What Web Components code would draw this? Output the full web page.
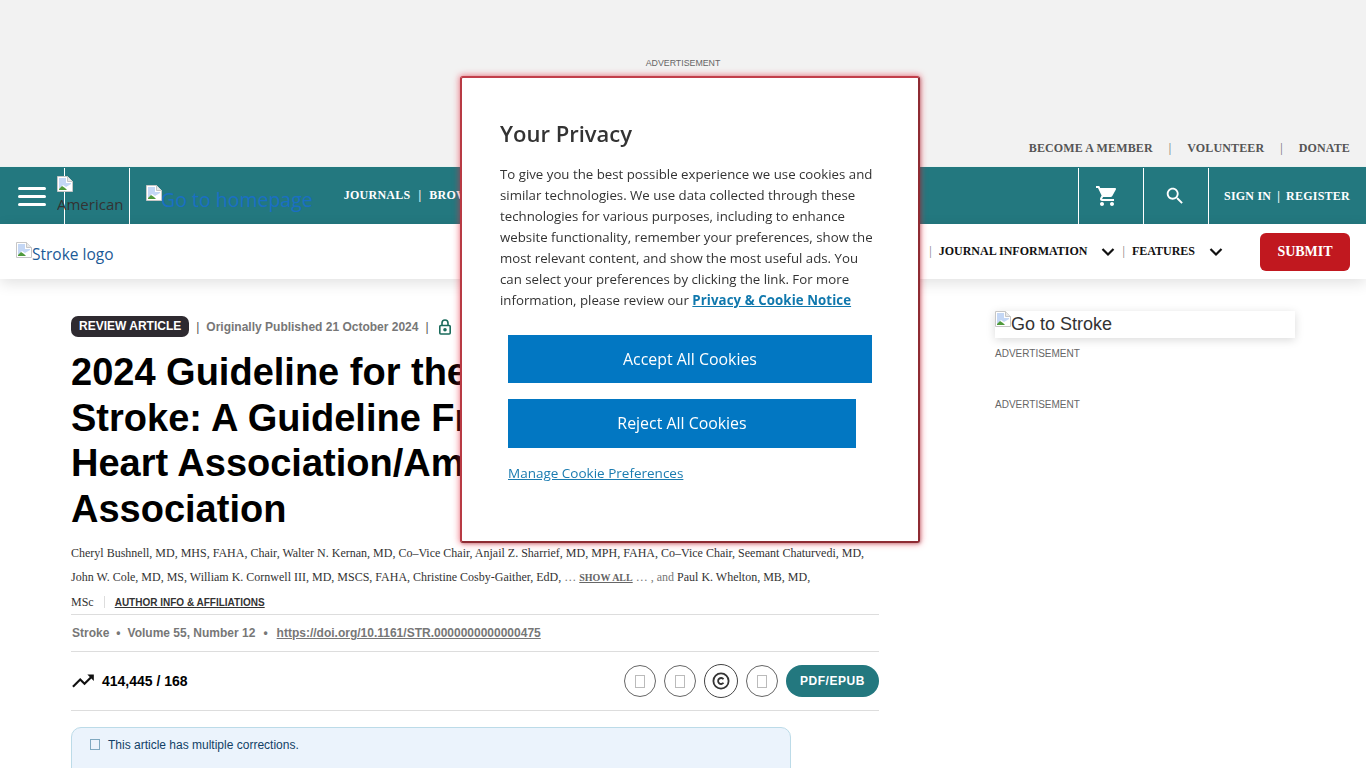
<!DOCTYPE html>
<html lang="en">
<head>
<meta charset="utf-8">
<title>Stroke</title>
<style>
  html, body { margin: 0; padding: 0; height: 768px; overflow: hidden; background: #fff; }
  body { font-family: "Liberation Sans", Arial, sans-serif; }
</style>
</head>
<body>
<top-band></top-band>
<main-bar></main-bar>
<sub-nav></sub-nav>
<page-body>
  <article-head></article-head>
  <side-rail slot="side"></side-rail>
</page-body>
<consent-box></consent-box>

<script>
// shared broken image glyph, the site's pictures did not load
const brokenIcon = `<svg width="16" height="16" viewBox="0 0 16 16" style="flex:none;display:block">
  <path d="M.5.5h10l5 5v10H.5z" fill="#fff" stroke="#c6c6c6"/>
  <path d="M10.500.5v5h5" fill="#e9e9e9" stroke="#c6c6c6"/>
  <path d="M2 2h7v5H14v1L9 11 6 9 2 13z" fill="#c4d7f5"/>
  <path d="M2 14v-1l3-3 3 2 2 2z" fill="#4f9a3c"/>
</svg>`;

class TopBand extends HTMLElement {
  connectedCallback() {
    this.attachShadow({ mode: 'open' });
    this.shadowRoot.innerHTML = `
      <style>
        :host { display: block; height: 167px; background: #f2f2f2; box-sizing: border-box; border-bottom: 1px solid #eaf2f0; position: relative; }
        .ad { padding-top: 57px; text-align: center; font: 8.800px/12px "Liberation Sans", sans-serif; color: #666; }
        .links {
          display: flex; justify-content: flex-end; align-items: center;
          margin-top: 71px; padding-right: 16px;
          font: bold 12px/16px "Liberation Serif", serif; color: #555; letter-spacing: .130px;
        }
        .sep { margin: 0 16px; font-weight: normal; color: #666; }
      </style>
      <div class="ad">ADVERTISEMENT</div>
      <div class="links">
        <span>BECOME A MEMBER</span><span class="sep">|</span>
        <span>VOLUNTEER</span><span class="sep">|</span>
        <span>DONATE</span>
      </div>
    `;
  }
}

class MainBar extends HTMLElement {
  connectedCallback() {
    this.attachShadow({ mode: 'open' });
    this.shadowRoot.innerHTML = `
      <style>
        :host { display: flex; height: 57px; background: #23787f; color: #fff; box-sizing: border-box; }
        .cell { display: flex; align-items: center; justify-content: center; border-right: 1px solid #fff; margin-top: 1px; box-sizing: border-box; }
        .burger { width: 65px; flex-direction: column; gap: 5px; }
        .burger i { display: block; width: 28px; height: 3px; background: #fff; border-radius: 2px; }
        .alt { width: 65px; position: relative; }
        .alt div {
          position: absolute; left: -8px; top: 8px; width: 72px;
          font: 15px/22px "Open Sans", sans-serif; color: #333; overflow: hidden; white-space: nowrap;
        }
        .alt span { display: block; margin-top: 1px; }
        .home {
          display: flex; align-items: flex-start; margin-left: 16px; padding-top: 18px;
          font: 19.500px/24px "Open Sans", sans-serif; color: #1a6fc4; white-space: nowrap;
        }
        .home span { margin-top: 3px; margin-left: -1px; }
        nav {
          flex: 1; display: flex; align-items: center; gap: 8px; margin-left: 31px;
          font: bold 12px "Liberation Serif", serif; white-space: nowrap; letter-spacing: .250px;
        }
        .right { display: flex; }
        .right .cell { width: 65px; border-right: 0; border-left: 1px solid #fff; }
        .cart { padding-right: 8px; }
        .find { padding-right: 2px; }
        .auth {
          display: flex; align-items: center; gap: 6px; width: 158px; box-sizing: border-box;
          border-left: 1px solid #fff; margin-top: 1px; padding-left: 15px;
          font: bold 12px "Liberation Serif", serif; white-space: nowrap; letter-spacing: .220px;
        }
      </style>
      <div class="cell burger"><i></i><i></i><i></i></div>
      <div class="cell alt"><div>${brokenIcon}<span>American</span></div></div>
      <a class="home">${brokenIcon}<span>Go to homepage</span></a>
      <nav><span>JOURNALS</span><span>|</span><span>BROWSE</span></nav>
      <div class="right">
        <div class="cell cart">
          <svg width="24" height="24" viewBox="0 0 24 24" fill="#fff"><path d="M7 18c-1.100 0-1.990.9-1.990 2S5.900 22 7 22s2-.9 2-2-.9-2-2-2zM1 2v2h2l3.600 7.590-1.350 2.450c-.160.280-.250.610-.250.960 0 1.100.9 2 2 2h12v-2H7.420c-.140 0-.250-.110-.250-.250l.030-.120.900-1.630h7.450c.750 0 1.410-.410 1.750-1.030l3.580-6.490c.080-.140.120-.310.120-.480 0-.550-.450-1-1-1H5.210l-.940-2H1zm16 16c-1.100 0-1.990.9-1.990 2s.890 2 1.990 2 2-.9 2-2-.9-2-2-2z"/></svg>
        </div>
        <div class="cell find">
          <svg width="22" height="22" viewBox="0 0 24 24" fill="#fff"><path d="M15.500 14h-.790l-.280-.270C15.410 12.590 16 11.110 16 9.500 16 5.910 13.090 3 9.500 3S3 5.910 3 9.500 5.910 16 9.500 16c1.610 0 3.090-.590 4.230-1.570l.270.280v.790l5 4.990L20.490 19l-4.990-5zm-6 0C7.010 14 5 11.990 5 9.500S7.010 5 9.500 5 14 7.010 14 9.500 11.990 14 9.500 14z"/></svg>
        </div>
        <div class="auth"><span>SIGN IN</span><span>|</span><span>REGISTER</span></div>
      </div>
    `;
  }
}

class SubNav extends HTMLElement {
  connectedCallback() {
    this.attachShadow({ mode: 'open' });
    const chevron = `<svg width="14" height="14" viewBox="0 0 14 14" fill="none" stroke="#111" stroke-width="2.200"><path d="M1.500 4l5.500 5.500L12.500 4"/></svg>`;
    this.shadowRoot.innerHTML = `
      <style>
        :host {
          display: flex; align-items: center; height: 55px; background: #fff; position: relative;
          box-shadow: 0 4px 14px rgba(0,0,0,.12); box-sizing: border-box; padding: 0 16px;
        }
        .logo {
          display: flex; align-items: flex-start; flex: 1; padding-top: 4px;
          font: 15.500px/24px "Open Sans", sans-serif; color: #1c5a96; white-space: nowrap;
        }
        .item { font: bold 12px "Liberation Serif", serif; color: #111; white-space: nowrap; }
        .sep { font: 12px "Liberation Serif", serif; color: #777; }
        .chev { display: flex; margin: 0 7px 0 13px; }
        button {
          margin-left: 30px; width: 90px; height: 38px; border: 0; border-radius: 6px;
          background: #c1181f; color: #fff; font: bold 14px "Liberation Serif", serif; padding: 0;
        }
      </style>
      <a class="logo">${brokenIcon}<span>Stroke logo</span></a>
      <span class="sep" style="margin-right:7px">|</span>
      <span class="item">JOURNAL INFORMATION</span><span class="chev" style="margin-left:14px">${chevron}</span>
      <span class="sep" style="margin-right:7px">|</span>
      <span class="item">FEATURES</span><span class="chev" style="margin:0 7px 0 14px">${chevron}</span>
      <button>SUBMIT</button>
    `;
  }
}

class PageBody extends HTMLElement {
  connectedCallback() {
    this.attachShadow({ mode: 'open' });
    this.shadowRoot.innerHTML = `
      <style>
        :host { display: flex; padding-left: 71px; }
        .main { width: 808px; flex: none; }
        .side { width: 300px; flex: none; margin-left: 116px; }
      </style>
      <div class="main"><slot></slot></div>
      <div class="side"><slot name="side"></slot></div>
    `;
  }
}

class ArticleHead extends HTMLElement {
  connectedCallback() {
    this.attachShadow({ mode: 'open' });
    const tofu = `<span class="tofu"></span>`;
    this.shadowRoot.innerHTML = `
      <style>
        :host { display: block; font-family: "Liberation Sans", sans-serif; padding-top: 37px; }
        .meta { display: flex; align-items: center; height: 21px; font: bold 12px "Liberation Sans", sans-serif; color: #777; white-space: nowrap; }
        .badge { background: #2e2a30; color: #fff; border-radius: 7px; height: 21px; line-height: 21px; padding: 0 8px; }
        .pipe { font-weight: normal; color: #555; margin: 0 7px; }
        h1 { margin: 13px 0 0; font: bold 38px/45.600px "Liberation Sans", sans-serif; color: #000; }
        .authors { margin-top: 9px; font: 12px/24px "Liberation Serif", serif; color: #333; }
        .more { font-size: 10px; font-weight: bold; color: #666; text-decoration: underline; }
        .grey { color: #777; }
        .third { display: flex; align-items: center; height: 24px; }
        .third i { width: 1px; height: 12px; background: #ddd; margin: 0 10px; }
        .third a { font: bold 10px "Liberation Sans", sans-serif; color: #333; text-decoration: underline; }
        .cite {
          display: flex; align-items: center; height: 36px; border-top: 1px solid #ddd; border-bottom: 1px solid #ddd;
          font: bold 12px "Liberation Sans", sans-serif; color: #777; padding-left: 1px;
        }
        .cite b { margin: 0 7px; }
        .cite b.wide { margin: 0 9px 0 8px; }
        .cite a { text-decoration: underline; }
        .tools { display: flex; align-items: center; height: 58px; border-bottom: 1px solid #ddd; }
        .count { flex: 1; display: flex; align-items: center; gap: 6px; font: bold 14px "Liberation Sans", sans-serif; color: #000; }
        .count svg { margin-left: -1px; }
        .circle { width: 32px; height: 32px; border: 1px solid #666; border-radius: 50%; box-sizing: border-box; display: flex; align-items: center; justify-content: center; margin-right: 8px; }
        .circle.big { width: 34px; height: 34px; border-color: #444; }
        .tofu { display: inline-block; width: 10px; height: 13px; border: 1px solid #bbb; box-sizing: border-box; }
        .pill { width: 93px; height: 32px; border-radius: 16px; background: #23787f; color: #fff; font: bold 12px/32px "Liberation Sans", sans-serif; letter-spacing: .550px; text-align: center; }
        .alert {
          width: 720px; margin-top: 16px; height: 60px; box-sizing: border-box; background: #ebf3fc;
          border: 1px solid #bcdbe8; border-radius: 10px; padding: 9px 18px;
          display: flex; align-items: flex-start; gap: 8px; font: 12px/16px "Liberation Sans", sans-serif; color: #123f66;
        }
        .alert .tofu { border-color: #7fa8c0; height: 11px; margin-top: 2px; }
      </style>
      <div class="meta">
        <span class="badge">REVIEW ARTICLE</span>
        <span class="pipe">|</span>
        <span>Originally Published 21 October 2024</span>
        <span class="pipe">|</span>
        <svg width="16" height="16" viewBox="0 0 16 16" fill="none" stroke="#1a6b5c" stroke-width="1.600" style="margin-left:1px"><rect x="2.800" y="6.500" width="10.400" height="8.500" rx="1"/><path d="M5 6.500V4a3 3 0 0 1 6 0v2.500"/><circle cx="8" cy="10.700" r="1" fill="#1a6b5c"/></svg>
      </div>
      <h1>2024 Guideline for the Primary Prevention of Stroke: A Guideline From the American Heart Association/American Stroke Association</h1>
      <div class="authors">
        Cheryl Bushnell, MD, MHS, FAHA, Chair, Walter N. Kernan, MD, Co–Vice Chair, Anjail Z. Sharrief, MD, MPH, FAHA, Co–Vice Chair, Seemant Chaturvedi, MD,<br>
        John W. Cole, MD, MS, William K. Cornwell III, MD, MSCS, FAHA, Christine Cosby-Gaither, EdD, <span class="grey">…</span> <span class="more">SHOW ALL</span> <span class="grey">… , and</span> Paul K. Whelton, MB, MD,
        <div class="third">MSc<i></i><a>AUTHOR INFO &amp; AFFILIATIONS</a></div>
      </div>
      <div class="cite"><span>Stroke</span><b>•</b><span>Volume 55, Number 12</span><b class="wide">•</b><a>https://doi.org/10.1161/STR.0000000000000475</a></div>
      <div class="tools">
        <div class="count">
          <svg width="26" height="26" viewBox="0 0 24 24" fill="#111"><path d="M16 6l2.290 2.290-4.880 4.880-4-4L2 16.590 3.410 18l6-6 4 4 6.300-6.290L22 12V6z"/></svg>
          414,445 / 168
        </div>
        <div class="circle">${tofu}</div>
        <div class="circle">${tofu}</div>
        <div class="circle big">
          <svg width="20" height="20" viewBox="0 0 20 20" fill="none" stroke="#333"><circle cx="10" cy="10" r="7.600" stroke-width="1.800"/><path d="M12.500 8.200a3 3 0 1 0 0 3.600" stroke-width="1.800"/></svg>
        </div>
        <div class="circle">${tofu}</div>
        <div class="pill">PDF/EPUB</div>
      </div>
      <div class="alert"><span class="tofu"></span><span>This article has multiple corrections.</span></div>
    `;
  }
}

class SideRail extends HTMLElement {
  connectedCallback() {
    this.attachShadow({ mode: 'open' });
    this.shadowRoot.innerHTML = `
      <style>
        :host { display: block; padding-top: 32px; }
        .go {
          display: flex; align-items: flex-start; height: 27px; background: #fff;
          box-shadow: 0 2px 10px rgba(0,0,0,.15); font: 18px/24px "Liberation Sans", sans-serif; color: #333;
        }
        .go span { margin-top: 1px; }
        .ad { font: 10px/12px "Liberation Sans", sans-serif; color: #666; }
      </style>
      <div class="go">${brokenIcon}<span>Go to Stroke</span></div>
      <div class="ad" style="margin-top:10px">ADVERTISEMENT</div>
      <div class="ad" style="margin-top:39px">ADVERTISEMENT</div>
    `;
  }
}

class ConsentBox extends HTMLElement {
  connectedCallback() {
    this.attachShadow({ mode: 'open' });
    this.shadowRoot.innerHTML = `
      <style>
        :host {
          position: fixed; left: 460px; top: 76px; width: 460px; height: 467px; box-sizing: border-box;
          background: #fff; border: 2px solid; border-color: #c23e4a #8e2b33 #8e2b33 #b83a44; border-radius: 3px;
          box-shadow: 0 0 6px 1px rgba(235,40,60,.55), 1px 1px 3px rgba(0,0,0,.25); padding: 39px 38px;
          font-family: "Open Sans", sans-serif; color: #333;
        }
        h2 { margin: 0; font: 600 22px/32px "Open Sans", sans-serif; color: #333; }
        p { margin: 15px 0 0; font: 13.250px/21px "Open Sans", sans-serif; color: #333; }
        p a { font-weight: 700; color: #1078ad; text-decoration: underline; letter-spacing: .080px; }
        .actions { display: flex; flex-direction: column; align-items: flex-start; margin: 24px 0 0 8px; }
        button {
          border: 0; padding: 0; background: #0277c2; color: #fff; font: 15.900px "Open Sans", sans-serif; display: block;
        }
        .accept { width: 364px; height: 48px; }
        .reject { width: 348px; height: 49px; margin-top: 16px; padding-bottom: 2px; }
        .manage { margin-top: 15px; font: 13.500px/20px "Open Sans", sans-serif; color: #1a7bb0; text-decoration: underline; }
      </style>
      <h2>Your Privacy</h2>
      <p>To give you the best possible experience we use cookies and similar technologies. We use data collected through these technologies for various purposes, including to enhance website functionality, remember your preferences, show the most relevant content, and show the most useful ads. You can select your preferences by clicking the link. For more information, please review our <a>Privacy &amp; Cookie Notice</a></p>
      <div class="actions">
        <button class="accept">Accept All Cookies</button>
        <button class="reject">Reject All Cookies</button>
        <a class="manage">Manage Cookie Preferences</a>
      </div>
    `;
  }
}

customElements.define('top-band', TopBand);
customElements.define('main-bar', MainBar);
customElements.define('sub-nav', SubNav);
customElements.define('page-body', PageBody);
customElements.define('article-head', ArticleHead);
customElements.define('side-rail', SideRail);
customElements.define('consent-box', ConsentBox);
</script>
</body>
</html>
